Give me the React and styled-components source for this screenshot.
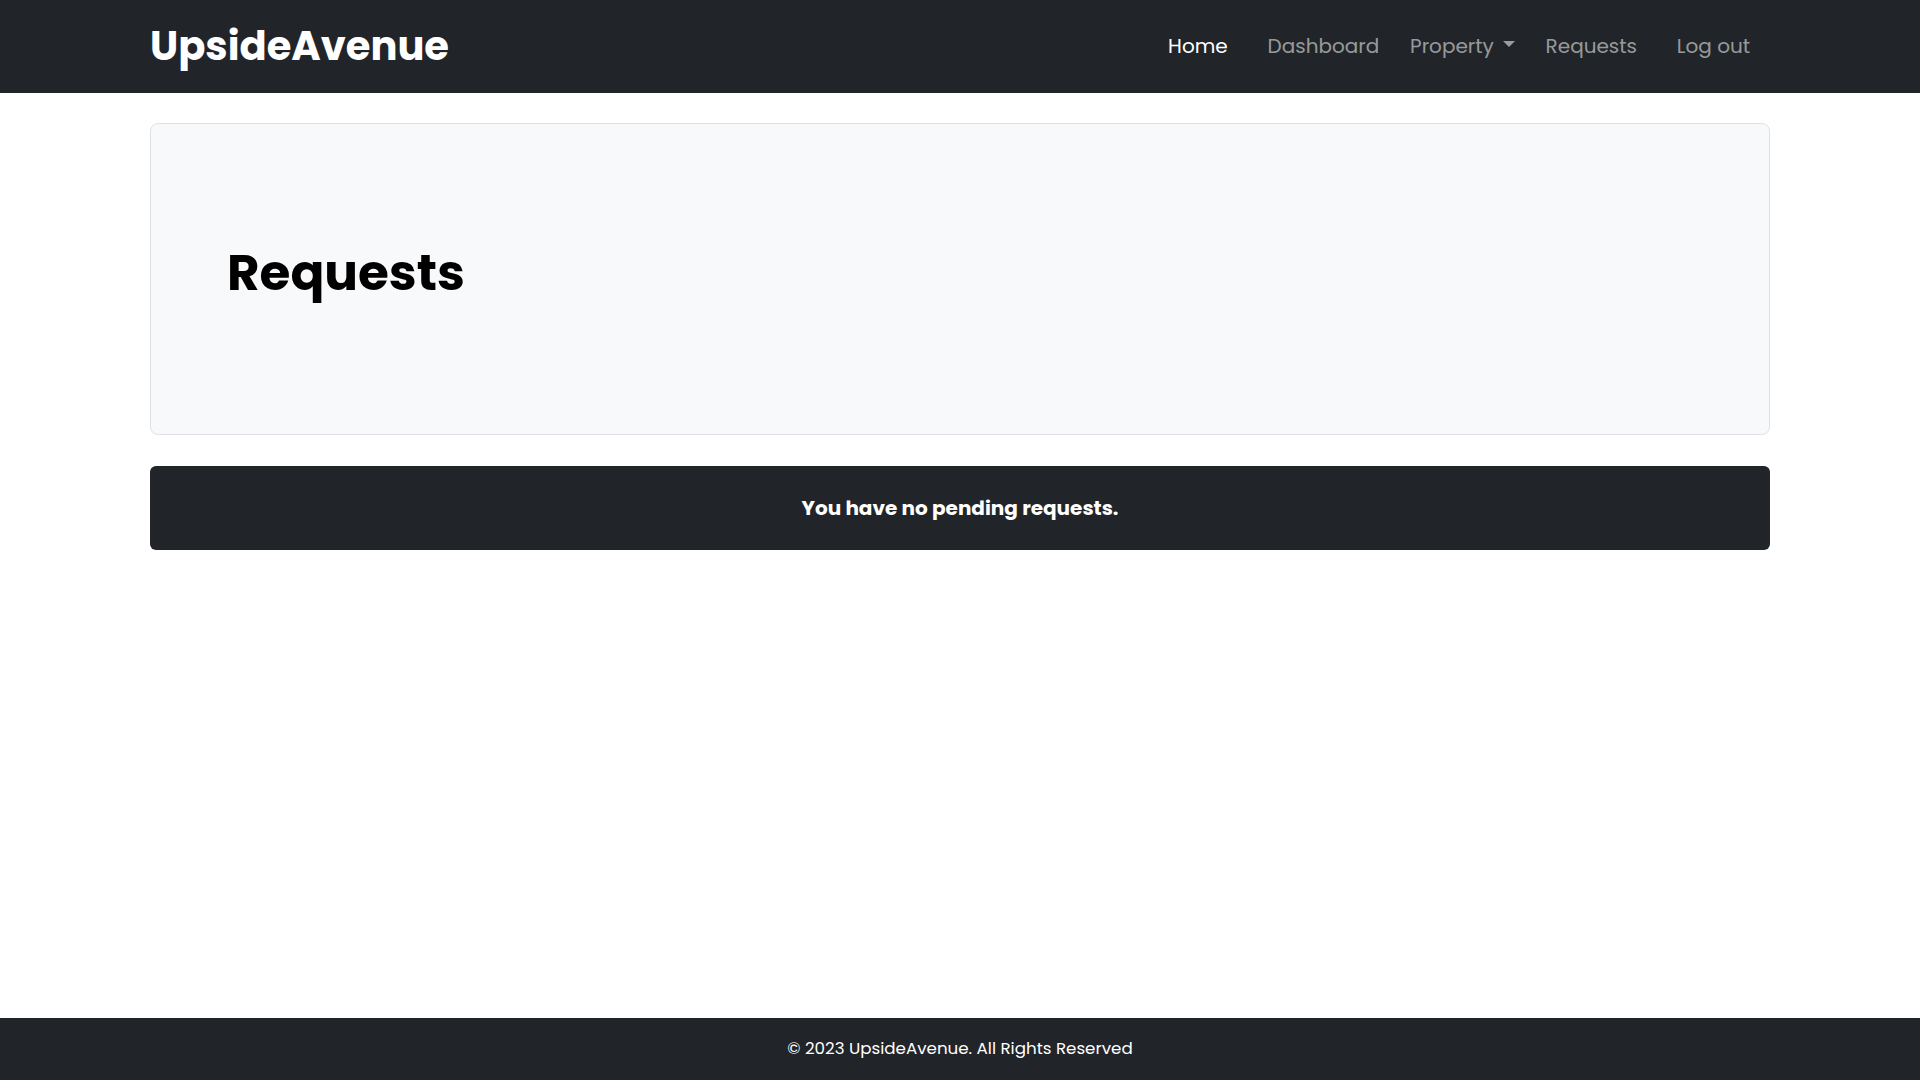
import React from "react";
import styled, { createGlobalStyle } from "styled-components";

const GlobalStyle = createGlobalStyle`
  * {
    box-sizing: border-box;
  }
  body {
    margin: 0;
    font-family: "Poppins", Inter, "Noto Sans", sans-serif;
    color: #212529;
    background: #fff;
  }
`;

const Page = styled.div`
  min-height: 100vh;
  display: flex;
  flex-direction: column;
`;

const Navbar = styled.nav`
  height: 93px;
  background-color: #212529;
  display: flex;
  align-items: center;
  padding: 0 154.6px 2px 150px;
`;

const Brand = styled.a`
  font-size: 40px;
  font-weight: 700;
  line-height: 1.2;
  color: #fff;
  text-decoration: none;
`;

const NavList = styled.ul`
  list-style: none;
  margin: 0 0 0 auto;
  padding: 0;
  display: flex;
  align-items: center;
`;

const NavItem = styled.li`
  margin-left: ${(pr) => pr.$gap || 0}px;
`;

const NavLink = styled.a`
  display: block;
  font-size: 20px;
  line-height: 1.5;
  padding: 0 15.4px;
  text-decoration: none;
  cursor: pointer;
  color: ${(pr) => (pr.$active ? "#fff" : "rgba(255, 255, 255, 0.55)")};
  &:hover {
    color: rgba(255, 255, 255, 0.75);
  }
`;

const Caret = styled.span`
  display: inline-block;
  margin-left: 0.45em;
  vertical-align: 0.255em;
  border-top: 0.3em solid;
  border-right: 0.3em solid transparent;
  border-left: 0.3em solid transparent;
`;

const Main = styled.main`
  flex: 1;
  padding: 30px 150px 0 150px;
  display: flex;
  flex-direction: column;
  gap: 31px;
`;

const Jumbo = styled.section`
  background-color: #f8f9fa;
  border: 1px solid #dee2e6;
  border-radius: 8px;
  padding: 119px 76px 131px 76px;
  h1 {
    margin: 0;
    font-size: 50px;
    font-weight: 700;
    line-height: 1.2;
    color: #000;
  }
`;

const Notice = styled.div`
  height: 84px;
  background-color: #212529;
  border-radius: 6px;
  display: flex;
  align-items: center;
  justify-content: center;
  color: #fff;
  font-size: 20px;
  font-weight: 700;
`;

const Footer = styled.footer`
  height: 62px;
  background-color: #212529;
  color: #fff;
  display: flex;
  align-items: center;
  justify-content: center;
  padding-bottom: 2px;
  font-size: 16.7px;
`;

const links = [
  { label: "Home", active: true, gap: 0 },
  { label: "Dashboard", gap: 9 },
  { label: "Property", caret: true, gap: 0 },
  { label: "Requests", gap: 0 },
  { label: "Log out", gap: 9 },
];

const App = () => {
  return (
    <Page>
      <GlobalStyle />
      <Navbar>
        <Brand href="#">UpsideAvenue</Brand>
        <NavList>
          {links.map((l) => (
            <NavItem key={l.label} $gap={l.gap}>
              <NavLink $active={l.active}>
                {l.label}
                {l.caret && <Caret />}
              </NavLink>
            </NavItem>
          ))}
        </NavList>
      </Navbar>
      <Main>
        <Jumbo>
          <h1>Requests</h1>
        </Jumbo>
        <Notice>You have no pending requests.</Notice>
      </Main>
      <Footer>© 2023 UpsideAvenue. All Rights Reserved</Footer>
    </Page>
  );
};

export default App;
